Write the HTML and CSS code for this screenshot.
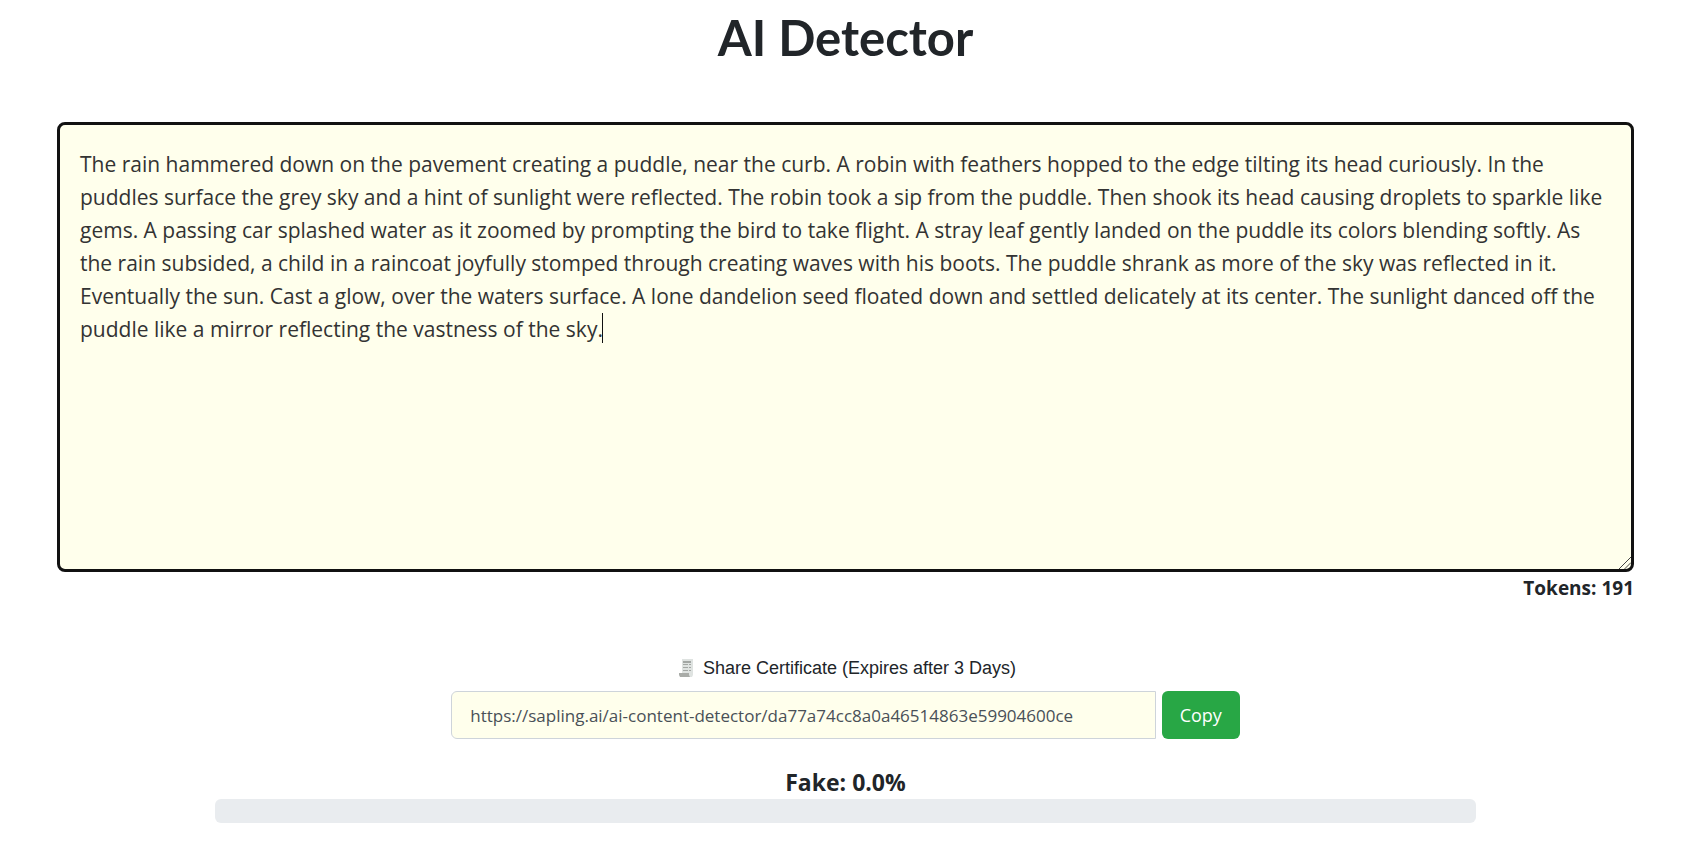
FILE: index.html
```html
<!DOCTYPE html>
<html lang="en">
<head>
  <meta charset="UTF-8">
  <meta name="viewport" content="width=device-width, initial-scale=1.0">
  <title>AI Detector</title>
  <link rel="stylesheet" href="styles.css">
</head>
<body>
  <main class="container">
    <h1>AI Detector</h1>

    <div class="editor">
      <textarea id="content" class="content" aria-label="Text to check" spellcheck="false">The rain hammered down on the pavement creating a puddle, near the curb. A robin with feathers hopped to the edge tilting its head curiously. In the puddles surface the grey sky and a hint of sunlight were reflected. The robin took a sip from the puddle. Then shook its head causing droplets to sparkle like gems. A passing car splashed water as it zoomed by prompting the bird to take flight. A stray leaf gently landed on the puddle its colors blending softly. As the rain subsided, a child in a raincoat joyfully stomped through creating waves with his boots. The puddle shrank as more of the sky was reflected in it. Eventually the sun. Cast a glow, over the waters surface. A lone dandelion seed floated down and settled delicately at its center. The sunlight danced off the puddle like a mirror reflecting the vastness of the sky.</textarea>
      <span class="caret"></span>
      <svg class="grip" viewBox="0 0 13 13" aria-hidden="true">
        <path fill="none" stroke="#333" d="M0 13L13 0M6 13L13 6"/>
      </svg>
    </div>
    <div class="tokens">Tokens: 191</div>

    <div class="share">
      <label class="share-label" for="shareUrl">
        <svg class="share-icon" viewBox="0 0 14 18" aria-hidden="true">
          <path fill="#dfe3e1" d="M3 0h11v16l-1 2H3z"/>
          <path fill="#a9aca8" d="M0 14h10v2l1 2H1l-1-2z"/>
          <path stroke="#a3a7a4" d="M4 2.5h8M4 3.5h8M4 5.500h5M10 5.500h2M4 8.500h5M10 8.500h2M4 11.500h5M10 11.500h2"/>
        </svg>
        Share Certificate (Expires after 3 Days)
      </label>
      <div class="share-row">
        <input type="text" id="shareUrl" value="https://sapling.ai/ai-content-detector/da77a74cc8a0a46514863e59904600ce" readonly>
        <button type="button">Copy</button>
      </div>
    </div>

    <div class="score">
      <div class="score-label" id="scoreLabel">Fake: 0.0%</div>
      <div class="progress" role="progressbar" aria-labelledby="scoreLabel" aria-valuenow="0" aria-valuemin="0" aria-valuemax="100">
        <div class="progress-bar" style="width: 0%"></div>
      </div>
    </div>
  </main>
</body>
</html>
```
FILE: styles.css
```css
* {
  box-sizing: border-box;
}

body {
  margin: 0;
  font-family: "Open Sans", "Noto Sans", sans-serif;
  color: #212529;
  background-color: #fff;
}

.container {
  padding: 7px 57px 32px;
}

h1 {
  margin: 0 0 55px;
  font-family: Lato, sans-serif;
  font-size: 49px;
  font-weight: 700;
  line-height: 60px;
  text-align: center;
}

.editor {
  position: relative;
}

.content {
  display: block;
  width: 100%;
  height: 450px;
  padding: 23px 20px;
  border: 3px solid #111;
  border-radius: 8px;
  outline: none;
  background-color: #ffffec;
  color: #333;
  font-family: "Open Sans", "Noto Sans", sans-serif;
  font-size: 21px;
  font-weight: 400;
  line-height: 33px;
  resize: vertical;
}

.content::-webkit-resizer {
  background: transparent;
}

/* text cursor after the last sentence */
.caret {
  position: absolute;
  left: 545px;
  top: 191px;
  width: 1px;
  height: 30px;
  background-color: #111;
}

.grip {
  position: absolute;
  right: 3px;
  bottom: 3px;
  width: 12px;
  height: 12px;
  pointer-events: none;
}

.tokens {
  font-size: 19px;
  font-weight: 700;
  line-height: 32px;
  text-align: right;
}

.share {
  width: 50%;
  margin: 49px auto 0;
}

.share-label {
  display: flex;
  align-items: center;
  justify-content: center;
  gap: 10px;
  margin-bottom: 8px;
  padding-left: 4px;
  font-family: "Liberation Sans", Arial, sans-serif;
  font-size: 18px;
  line-height: 30px;
}

.share-icon {
  width: 14px;
  height: 18px;
}

.share-row {
  display: flex;
  gap: 6px;
}

input {
  flex: 1;
  min-width: 0;
  height: 48px;
  padding: 0 18px;
  border: 1px solid #ced4da;
  border-radius: 6px 0 0 6px;
  background-color: #ffffec;
  color: #495057;
  font-family: "Open Sans", "Noto Sans", sans-serif;
  font-size: 17px;
}

button {
  width: 78px;
  height: 48px;
  padding: 0;
  border: none;
  border-radius: 6px;
  background-color: #28a745;
  color: #fff;
  font-family: "Open Sans", "Noto Sans", sans-serif;
  font-size: 18px;
  cursor: pointer;
}

button:hover {
  background-color: #218838;
}

.score {
  width: 80%;
  margin: 26px auto 0;
}

.score-label {
  font-size: 23px;
  font-weight: 700;
  line-height: 34px;
  text-align: center;
}

.progress {
  height: 24px;
  border-radius: 6px;
  background-color: #e9ecef;
  overflow: hidden;
}

.progress-bar {
  height: 100%;
  background-color: #dc3545;
}
```
